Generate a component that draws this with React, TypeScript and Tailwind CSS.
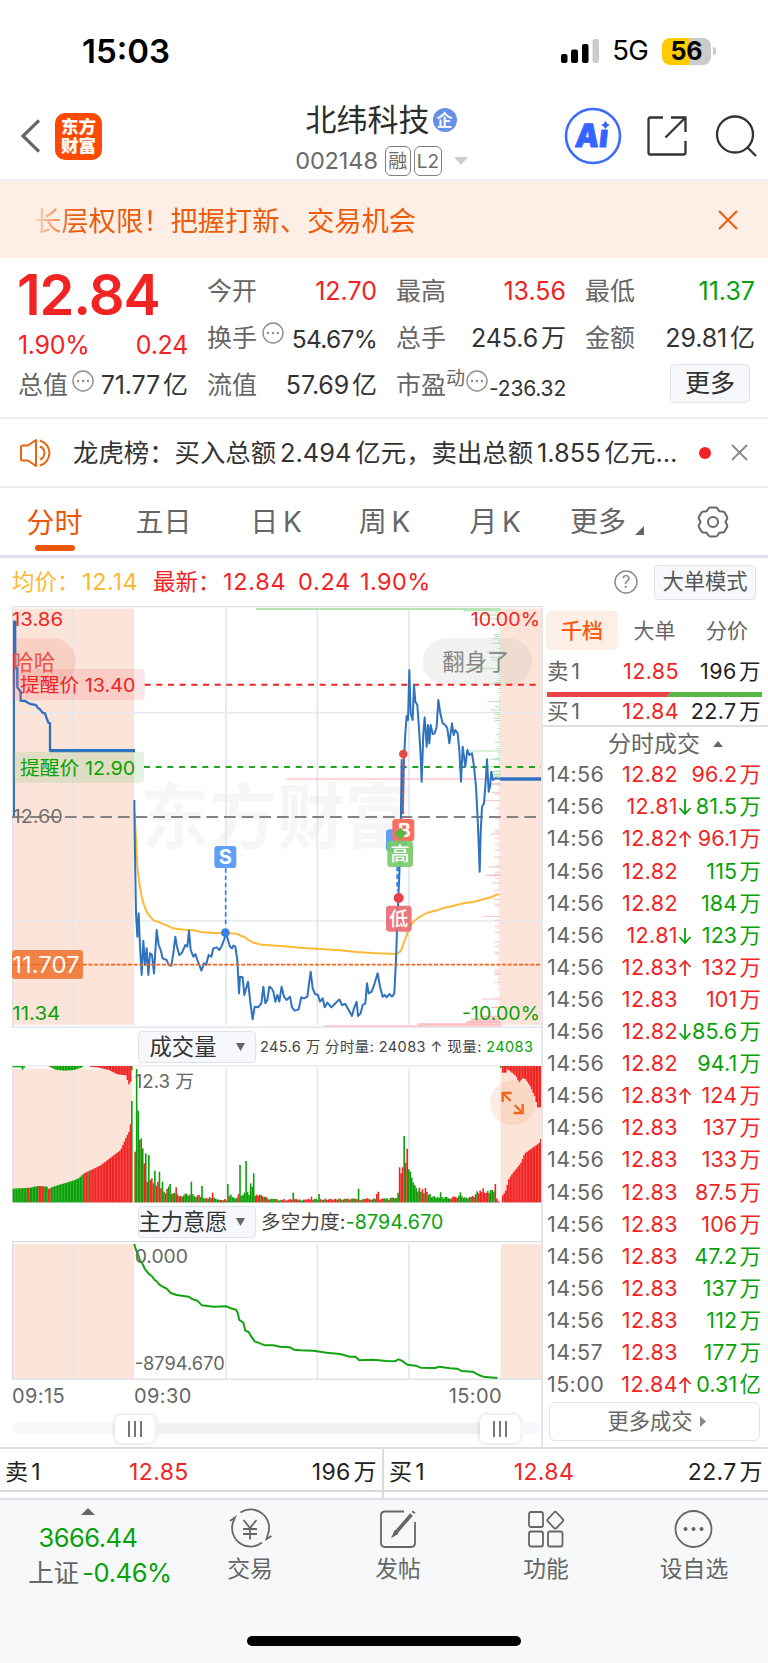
import type { ReactNode } from "react";

const RED = "#f12323";
const GREEN = "#07a207";
const PEACH = "#fce5d8";
const BLUE = "#2f72c0";

type Tone = "red" | "green";

const toneText: Record<Tone, string> = {
  red: "text-[#f12323]",
  green: "text-[#07a207]",
};

interface Trade {
  time: string;
  price: string;
  move?: "up" | "down";
  amount: string;
  unit?: string;
  tone: Tone;
}

const trades: Trade[] = [
  { time: "14:56", price: "12.82", amount: "96.2", tone: "red" },
  { time: "14:56", price: "12.81", move: "down", amount: "81.5", tone: "green" },
  { time: "14:56", price: "12.82", move: "up", amount: "96.1", tone: "red" },
  { time: "14:56", price: "12.82", amount: "115", tone: "green" },
  { time: "14:56", price: "12.82", amount: "184", tone: "green" },
  { time: "14:56", price: "12.81", move: "down", amount: "123", tone: "green" },
  { time: "14:56", price: "12.83", move: "up", amount: "132", tone: "red" },
  { time: "14:56", price: "12.83", amount: "101", tone: "red" },
  { time: "14:56", price: "12.82", move: "down", amount: "85.6", tone: "green" },
  { time: "14:56", price: "12.82", amount: "94.1", tone: "green" },
  { time: "14:56", price: "12.83", move: "up", amount: "124", tone: "red" },
  { time: "14:56", price: "12.83", amount: "137", tone: "red" },
  { time: "14:56", price: "12.83", amount: "133", tone: "red" },
  { time: "14:56", price: "12.83", amount: "87.5", tone: "red" },
  { time: "14:56", price: "12.83", amount: "106", tone: "red" },
  { time: "14:56", price: "12.83", amount: "47.2", tone: "green" },
  { time: "14:56", price: "12.83", amount: "137", tone: "green" },
  { time: "14:56", price: "12.83", amount: "112", tone: "green" },
  { time: "14:57", price: "12.83", amount: "177", tone: "green" },
  { time: "15:00", price: "12.84", move: "up", amount: "0.31", unit: "亿", tone: "green" },
];

// Chart drawings use a grid of three units per pixel.
const auctionLine =
  "42,205 52,205 52,262 62,275 62,302 75,303 90,312 108,315 112,322 120,328 128,338 135,340 140,355 145,368 150,370 150,452 405,452";
const morningLine =
  "403,600 404,700 408,940 412,1010 416,940 420,1040 425,1125 430,1022 435,1095 440,1045 445,1125 450,1060 456,1065 462,1120 470,990 476,1035 482,1050 488,1075 500,1080 506,1095 514,1097 520,1060 526,1010 531,1040 538,1065 546,1058 556,1035 562,1040 567,992 572,1050 580,1070 586,1062 592,1080 600,1100 604,1112 612,1090 618,1095 626,1065 634,1070 640,1045 650,1042 658,1050 664,1040 672,1020 678,1000 684,1020 690,1040 696,1045 700,1037 706,1040 712,1080 717,1180 720,1130 728,1132 733,1185 744,1145 752,1215 758,1258 764,1220 774,1222 784,1210 790,1160 796,1210 802,1200 808,1160 815,1165";
const afternoonLine =
  "5,1165 10,1175 16,1205 22,1185 28,1205 35,1160 42,1190 50,1200 60,1190 66,1222 74,1232 86,1228 94,1192 102,1195 112,1190 122,1115 128,1165 135,1182 144,1185 150,1205 158,1195 164,1222 172,1208 184,1222 194,1212 208,1198 216,1215 226,1212 236,1230 246,1248 252,1225 260,1205 264,1248 272,1240 278,1215 286,1210 291,1150 296,1180 305,1175 314,1150 323,1120 330,1160 338,1190 344,1185 350,1192 358,1182 366,1190 373,1180 378,1080 382,960 387,850 392,700 395,480 398,640 402,480 406,400 410,348 414,360 418,210 422,340 428,360 432,255 436,305 442,315 448,400 452,470 455,545 460,400 464,352 470,440 474,375 478,430 482,375 488,402 494,400 500,380 505,300 511,340 518,370 526,375 532,385 538,430 546,370 551,405 556,390 563,400 568,450 573,545 578,440 586,500 592,450 598,465 606,460 612,500 618,560 624,680 629,815 632,700 636,620 642,610 648,530 651,478 656,575 660,560 664,515 669,540 676,535 690,536";
const averageLine =
  "404,640 408,720 412,800 418,850 425,890 432,915 440,935 450,950 462,962 480,968 500,976 520,985 550,989 580,991 605,996 640,999 676,999 710,1001 725,1009 733,1010 742,1018 760,1028 785,1034 830,1037 870,1040 910,1044 960,1047 1020,1051 1070,1056 1130,1060 1190,1062 1200,1055 1206,1045 1212,1025 1217,1015 1222,1000 1230,980 1240,965 1255,953 1280,939 1310,931 1335,923 1370,915 1395,909 1420,906 1450,898 1475,891 1490,884 1497,883";
const forceLine =
  "403,672 408,690 414,702 420,722 428,732 434,746 446,761 456,769 464,780 472,786 478,794 490,801 500,806 512,819 530,825 566,830 576,837 592,842 606,856 640,860 680,859 690,864 708,869 713,878 718,900 730,908 736,932 746,936 754,950 764,964 780,970 795,976 820,976 840,980 870,982 882,989 900,991 940,992 980,998 1020,1002 1050,1010 1066,1010 1078,1021 1120,1019 1160,1023 1185,1024 1195,1018 1205,1022 1222,1034 1248,1037 1262,1043 1306,1044 1318,1040 1350,1045 1372,1046 1384,1053 1418,1055 1436,1065 1450,1070 1492,1074";

type Point = [number, number];

function sample(points: Point[], x: number) {
  for (let i = 1; i < points.length; i++) {
    const [x0, y0] = points[i - 1];
    const [x1, y1] = points[i];
    if (x <= x1) return y0 + ((y1 - y0) * Math.max(0, x - x0)) / (x1 - x0);
  }
  return points[points.length - 1][1];
}

function noise(i: number) {
  const v = Math.sin(i * 12.9898) * 43758.5453;
  return v - Math.floor(v);
}

interface Bar {
  x: number;
  y: number;
  h: number;
  fill: string;
}

const openingProfile: Point[] = [
  [38, 506], [90, 503], [100, 500], [115, 498], [139, 500], [143, 507], [155, 501], [180, 493],
  [220, 481], [235, 474], [250, 460], [300, 436], [360, 390], [375, 355], [385, 335], [391, 303],
];
const openingTop: Point[] = [
  [38, 142], [60, 142], [66, 150], [72, 140], [145, 140], [165, 149], [190, 152], [220, 150],
  [250, 140], [290, 142], [325, 150], [350, 163], [376, 166], [384, 194], [391, 182],
];
const closingProfile: Point[] = [
  [1507, 526], [1515, 512], [1525, 475], [1540, 455], [1560, 430], [1572, 400], [1600, 380], [1615, 370], [1620, 357],
];
const closingTop: Point[] = [
  [1507, 158], [1515, 158], [1520, 147], [1545, 167], [1555, 188], [1566, 174], [1575, 178], [1590, 202],
  [1603, 232], [1610, 262], [1621, 262],
];
const tradingProfile: Point[] = [
  [515, 42], [530, 24], [600, 21], [620, 16], [660, 10], [680, 9], [684, 30], [706, 12], [715, 32],
  [775, 30], [800, 12], [830, 9], [1130, 11], [1190, 14], [1195, 85], [1240, 52], [1270, 42], [1290, 22],
  [1310, 18], [1340, 14], [1370, 18], [1405, 15], [1430, 32], [1482, 40], [1490, 4], [1500, 4],
];
const spikes: [number, number, Tone][] = [
  [405, 395, "red"], [409, 147, "green"], [414, 272, "green"], [418, 360, "red"], [423, 355, "green"],
  [428, 385, "green"], [432, 430, "red"], [437, 400, "green"], [441, 485, "red"], [446, 405, "green"],
  [451, 480, "red"], [455, 475, "red"], [460, 490, "red"], [464, 452, "green"], [469, 497, "red"],
  [473, 485, "red"], [478, 455, "green"], [482, 505, "red"], [487, 485, "green"], [492, 515, "green"],
  [497, 520, "red"], [501, 507, "red"], [506, 500, "green"], [511, 492, "green"], [529, 502, "red"],
  [573, 485, "green"], [605, 498, "green"], [637, 518, "red"], [683, 492, "green"], [719, 435, "green"],
  [738, 423, "green"], [752, 490, "green"], [756, 500, "green"], [761, 460, "green"], [879, 518, "green"],
  [934, 530, "red"], [956, 522, "green"], [1075, 506, "green"], [1130, 522, "red"], [1134, 515, "red"],
  [1198, 442, "red"], [1203, 460, "red"], [1208, 442, "red"], [1212, 348, "green"], [1217, 428, "red"],
  [1222, 386, "red"], [1226, 448, "green"], [1231, 455, "green"], [1235, 473, "green"], [1322, 517, "green"],
  [1381, 517, "green"], [1450, 505, "red"], [1470, 510, "green"], [1486, 492, "red"], [1500, 470, "red"],
];

function openingTone(x: number) {
  if (x < 82) return GREEN;
  if (x < 87) return RED;
  if (x < 113) return GREEN;
  if (x < 125) return RED;
  if (x < 140) return GREEN;
  if (x < 152) return RED;
  if (x < 249) return GREEN;
  if (x < 258) return RED;
  return x < 263 ? GREEN : RED;
}

function buildVolumeBars() {
  const bars: Bar[] = [];
  for (let x = 38; x < 392; x += 4.56) {
    const y = sample(openingProfile, x);
    const top = sample(openingTop, x);
    bars.push({ x, y, h: 547 - y, fill: openingTone(x) });
    if (top > 141) bars.push({ x, y: 138, h: top - 138, fill: x > 250 || (x > 140 && x < 152) ? RED : GREEN });
  }
  bars.push({ x: 393, y: 243, h: 304, fill: GREEN }, { x: 393, y: 138, h: 12, fill: GREEN });

  for (let i = 0; i < 240; i++) {
    const x = 403 + i * 4.56;
    const spike = spikes.find(([sx]) => Math.abs(sx - 2 - x) <= 2.28);
    if (spike) {
      bars.push({ x, y: spike[1], h: 547 - spike[1], fill: spike[2] === "red" ? RED : GREEN });
      continue;
    }
    const h = Math.max(2, sample(tradingProfile, x) * (0.6 + 0.55 * noise(i + 3)));
    const greenShare = x > 1225 && x < 1440 ? 0.75 : 0.45;
    bars.push({ x, y: 547 - h, h, fill: noise(i * 1.7 + 11) < greenShare ? GREEN : RED });
  }

  bars.push({ x: 1500, y: 138, h: 6, fill: GREEN });
  for (let x = 1506; x < 1620; x += 4.56) {
    const y = sample(closingProfile, x);
    bars.push({ x, y, h: 547 - y, fill: RED });
    bars.push({ x, y: 138, h: sample(closingTop, x) - 138, fill: RED });
  }
  return bars;
}

const volumeBars = buildVolumeBars();

// Order book depth: [y, left edge, thickness]
const askDepth: [number, number, number][] = [
  [27, 768, 6], [32, 1390, 4], [45, 1450, 4], [57, 1413, 3], [104, 1480, 3], [116, 1478, 3], [130, 1474, 3],
  [156, 1460, 3], [172, 1470, 3], [180, 1476, 3], [205, 1403, 3], [252, 1472, 3], [305, 1462, 3],
  [330, 1472, 3], [354, 1480, 3], [404, 1487, 3], [453, 1398, 3], [478, 1470, 3], [500, 1468, 3], [515, 1476, 4], [524, 1480, 6],
];
const bidDepth: [number, number, number][] = [
  [537, 860, 4], [552, 1465, 5], [577, 1474, 3], [602, 1455, 3], [652, 1472, 3], [702, 1471, 3], [771, 1480, 3],
  [801, 1465, 3], [826, 1458, 4], [849, 1477, 3], [899, 1482, 3], [949, 1448, 3], [1122, 1484, 3],
  [1147, 1484, 3], [1197, 1445, 3], [1222, 1473, 4], [1250, 1440, 6], [1259, 1412, 7], [1266, 1399, 6], [1273, 1252, 7], [1278, 972, 4],
];

function depthTicks(from: number, to: number, seed: number) {
  const out: { y: number; w: number }[] = [];
  for (let y = from; y < to; y += 6) {
    const n = noise(y + seed);
    out.push({ y, w: n > 0.82 ? 18 : 2 + n * 8 });
  }
  return out;
}

function Label({
  x, y, size = 56, fill, width, weight, children,
}: {
  x: number; y: number; size?: number; fill: string; width?: number; weight?: number; children: ReactNode;
}) {
  return (
    <text x={x} y={y} fontSize={size} fill={fill} textLength={width} fontWeight={weight} lengthAdjust="spacingAndGlyphs">
      {children}
    </text>
  );
}

function Grid({ top, bottom }: { top: number; bottom: number }) {
  return (
    <g stroke="#e3e6ed" strokeWidth="5">
      {[219, 678, 952, 1227].map((x) => (
        <line key={x} x1={x} x2={x} y1={top} y2={bottom} />
      ))}
    </g>
  );
}

function PriceChart() {
  return (
    <svg viewBox="36 18 1590 1266" className="block h-[422px] w-[530px]">
      <rect x="36" y="26" width="366" height="1249" fill={PEACH} />
      <rect x="1502" y="26" width="122" height="1249" fill={PEACH} />
      <Label x={424} y={730} size={216} width={816} fill="#f6f6f6" weight={700}>东方财富</Label>
      <Grid top={24} bottom={1275} />
      <path d="M36 338H1624M36 963H1624" stroke="#e6e9ef" strokeWidth="5" />
      <path d="M36 19.5H1626M37.5 18V1284M36 1281.5H1626" stroke="#dcdfe6" strokeWidth="4" fill="none" />

      <g fill="#b9e5b6">
        {askDepth.map(([y, x, h]) => <rect key={y} x={x} y={y - h / 2} width={1502 - x} height={h} />)}
        {depthTicks(36, 530, 1).map(({ y, w }) => <rect key={y} x={1502 - w} y={y} width={w} height="3" />)}
      </g>
      <g fill="#fcbfc3">
        {bidDepth.map(([y, x, h]) => <rect key={y} x={x} y={y - h / 2} width={1502 - x} height={h} />)}
        {depthTicks(545, 1245, 5).map(({ y, w }) => <rect key={y} x={1502 - w} y={y} width={w} height="3" />)}
      </g>

      {/* Bullet comments */}
      <path d="M36 115H158a70 70 0 0 1 0 140H36z" fill="#f5b5ae" fillOpacity=".45" />
      <rect x="1268" y="115" width="329" height="140" rx="70" fill="#b8b8b8" fillOpacity=".2" />
      <Label x={1327} y={211} size={67} width={202} fill="#868686">翻身了</Label>

      <g fill="none" stroke={BLUE}>
        <path d="M42 650V62" strokeWidth="6" />
        <path d="M44 205V62" strokeWidth="10" />
        <polyline points={auctionLine} strokeWidth="7" />
        <path d="M150 452H405" strokeWidth="10" />
        <path d="M1500 537H1624" strokeWidth="11" />
      </g>
      <Label x={36} y={210} size={64} width={130} fill="#ee5148">哈哈</Label>

      <path d="M36 207H424q10 0 10 10V290q0 10-10 10H36z" fill="#f56a72" fillOpacity=".18" />
      <path d="M36 455H422q10 0 10 10V538q0 10-10 10H36z" fill="#73be70" fillOpacity=".2" />
      <path d="M434 254H1624" stroke={RED} strokeWidth="6" strokeDasharray="18 17" />
      <path d="M432 501H1624" stroke="#1fa61f" strokeWidth="6" strokeDasharray="18 17" />
      <path d="M36 651H1620" stroke="#838383" strokeWidth="6" strokeDasharray="35 18" />

      <g fill="none" strokeLinejoin="round">
        <polyline points={averageLine} stroke="#fbb935" strokeWidth="6" />
        <polyline points={morningLine} stroke={BLUE} strokeWidth="6" />
        <polyline points={afternoonLine} stroke={BLUE} strokeWidth="6" transform="translate(810 0)" />
      </g>
      <path d="M248 1094H1626" stroke="#f1661f" strokeWidth="5" strokeDasharray="12 5" />

      <Label x={36} y={77} width={153} fill={RED}>13.86</Label>
      <Label x={60} y={277} size={57} width={346} fill={RED}>提醒价 13.40</Label>
      <Label x={60} y={525} size={57} width={346} fill={GREEN}>提醒价 12.90</Label>
      <Label x={38} y={669} width={150} fill="#707070">12.60</Label>
      <rect x="36" y="1050" width="213" height="87" rx="10" fill="#f08246" />
      <path d="M40 1094H244" stroke="#e8641d" strokeWidth="4" strokeDasharray="12 5" />
      <Label x={37} y={1119} size={68} width={202} fill="#fff">11.707</Label>
      <Label x={37} y={1261} width={144} fill={GREEN}>11.34</Label>
      <Label x={1412} y={77} width={208} fill={RED}>10.00%</Label>
      <Label x={1386} y={1261} width={234} fill={GREEN}>-10.00%</Label>

      {/* Sell marker */}
      <path d="M677 805V975" stroke="#3580e6" strokeWidth="5" strokeDasharray="13 9" />
      <circle cx="676" cy="998" r="13" fill="#3581ea" />
      <rect x="643" y="738" width="66" height="66" rx="10" fill="#5d9ff9" />
      <text x="676" y="792" fontSize="60" fontWeight="700" fill="#fff" textAnchor="middle">S</text>

      {/* Buy marker, day high and day low */}
      <path d="M1210 470V655" stroke="#eb4b46" strokeWidth="5" strokeDasharray="12 8" />
      <path d="M1193 800V872" stroke="#3580e6" strokeWidth="8" strokeDasharray="14 9" />
      <circle cx="1210" cy="462" r="13" fill="#e64a48" />
      <rect x="1158" y="688" width="64" height="66" rx="10" fill="#5d9ff9" />
      <rect x="1177" y="657" width="66" height="66" rx="10" fill="#fa7061" />
      <text x="1213" y="710" fontSize="58" fontWeight="700" fill="#fff" textAnchor="middle">B</text>
      <rect x="1162" y="722" width="77" height="79" rx="10" fill="#78cb6d" fillOpacity=".93" />
      <text x="1200" y="783" fontSize="57" fontWeight="500" fill="#fff" textAnchor="middle">高</text>
      <path d="M1201 685l15 16-15 16-15-16z" fill="#55b944" stroke="#55b944" strokeWidth="4" strokeLinejoin="round" />
      <circle cx="1196" cy="894" r="15" fill="#e64248" />
      <rect x="1158" y="917" width="77" height="78" rx="10" fill="#ea6970" fillOpacity=".9" />
      <text x="1196" y="977" fontSize="57" fontWeight="500" fill="#fff" textAnchor="middle">低</text>
    </svg>
  );
}

function VolumeChart() {
  return (
    <svg viewBox="36 135 1590 414" className="block h-[138px] w-[530px]">
      <path d="M36 137.5H1626" stroke="#edeff3" strokeWidth="5" />
      <rect x="36" y="146" width="366" height="401" fill={PEACH} />
      <rect x="1502" y="146" width="122" height="401" fill={PEACH} />
      <rect x="397" y="138" width="6" height="409" fill="#fff" />
      <Grid top={146} bottom={547} />
      <path d="M37.5 135V549M36 547.5H1626" stroke="#dcdfe6" strokeWidth="3" fill="none" />
      {volumeBars.map((b, i) => (
        <rect key={i} x={b.x} y={b.y} width="4.8" height={b.h} fill={b.fill} />
      ))}
      <Label x={404} y={204} width={178} fill="#666">12.3 万</Label>
      <circle cx="1538" cy="248" r="68" fill="#f6a27b" fillOpacity=".2" />
      <g fill="none" stroke="#f0671c" strokeWidth="7">
        <path d="M1508 246V219H1535M1508 219l24 24" />
        <path d="M1568 252V279H1541M1568 279l-24-24" />
      </g>
    </svg>
  );
}

function ForceChart() {
  return (
    <svg viewBox="36 663 1590 417" className="block h-[139px] w-[530px]">
      <rect x="36" y="672" width="366" height="404" fill={PEACH} />
      <rect x="1502" y="672" width="122" height="404" fill={PEACH} />
      <Grid top={672} bottom={1076} />
      <path d="M36 664.5H1626M37.5 663V1080M36 1077.5H1626" stroke="#d9dce3" strokeWidth="4" fill="none" />
      <polyline points={forceLine} fill="none" stroke="#12a312" strokeWidth="6" strokeLinejoin="round" />
      <Label x={404} y={729} width={160} fill="#666">0.000</Label>
      <Label x={404} y={1051} width={270} fill="#666">-8794.670</Label>
    </svg>
  );
}

function StatusBar() {
  return (
    <div className="flex h-[102px] items-center pl-[82px] pr-[52px]">
      <span className="text-[33px] font-semibold leading-none text-black">15:03</span>
      <div className="ml-auto flex items-center">
        <svg viewBox="0 0 40 26" className="mr-[12px] h-[26px] w-[40px]">
          <rect x="1" y="16" width="6.5" height="9" rx="2" />
          <rect x="11" y="11.5" width="7" height="13.5" rx="2" />
          <rect x="22" y="6" width="6.5" height="19" rx="2" />
          <rect x="32.5" y="1" width="6.5" height="24" rx="2" fill="#cbcbcb" />
        </svg>
        <span className="text-[27.5px] leading-none tracking-[-0.8px] text-black">5G</span>
        <div className="ml-[14px] flex h-[27px] w-[49px] items-center justify-center rounded-[8px] bg-[linear-gradient(90deg,#fecb00_56%,#cbcbcb_56%)] text-[25px] font-bold leading-none text-black">
          56
        </div>
        <div className="ml-[2px] h-[8px] w-[3px] rounded-r-full bg-[#cbcbcb]" />
      </div>
    </div>
  );
}

function TitleBar() {
  return (
    <header className="grid h-[77px] grid-cols-[192px_372px_204px]">
      <div className="flex items-center pb-[9px] pl-[20px]">
        <svg viewBox="0 0 20 34" className="h-[34px] w-[20px]" fill="none" stroke="#666" strokeWidth="3.2">
          <path d="M19 1.5L3 17l16 15.5" />
        </svg>
        <div className="ml-[15px] flex h-[47px] w-[47px] flex-col items-center justify-center rounded-[10px] bg-[#fe4a02] text-[17.5px] font-black leading-[19px] text-white">
          <span>东方</span>
          <span>财富</span>
        </div>
      </div>
      <div className="flex flex-col items-center">
        <div className="flex h-[35px] items-center pl-[6px]">
          <h1 className="text-[31px] leading-none text-[#2d2d2d]">北纬科技</h1>
          <span className="ml-[3px] flex h-[24px] w-[24px] items-center justify-center rounded-full bg-[#668fe8] text-[16px] font-bold leading-none text-white">
            企
          </span>
        </div>
        <div className="flex h-[42px] items-center pl-[7px] pt-[6px] text-[#6b6b6b]">
          <span className="text-[23.5px] leading-none tracking-[-0.1px]">002148</span>
          <span className="ml-[7px] flex h-[30px] w-[26px] items-center justify-center rounded-[6px] border border-[#808080] text-[19px] leading-none">
            融
          </span>
          <span className="ml-[3px] flex h-[30px] w-[28px] items-center justify-center rounded-[6px] border border-[#808080] text-[19px] leading-none">
            L2
          </span>
          <svg viewBox="0 0 14 8" className="ml-[12px] h-[8px] w-[14px]" fill="#ccc">
            <path d="M0 0h14L7 8z" />
          </svg>
        </div>
      </div>
      <div className="flex items-center pb-[9px]">
        <svg viewBox="0 0 58 58" className="h-[58px] w-[58px]">
          <circle cx="29" cy="29" r="27" fill="none" stroke="#3b6bff" strokeWidth="2.6" />
          <g transform="translate(4.5 0) skewX(-6)">
            <text x="10" y="40" fontSize="32" fontWeight="900" fill="#3565ff" stroke="#3565ff" strokeWidth=".8" textLength="33" lengthAdjust="spacingAndGlyphs">
              Ai
            </text>
          </g>
          <rect x="34.5" y="12" width="13" height="10.5" fill="#fff" />
          <path d="M41.5 13.5q1 3.5 4.5 4.5-3.5 1-4.5 4.5-1-3.5-4.5-4.5 3.5-1 4.5-4.5z" fill="#3565ff" />
        </svg>
        <svg viewBox="0 0 40 40" className="ml-[25px] h-[40px] w-[40px]" fill="none" stroke="#333" strokeWidth="2.3">
          <path d="M16 1.5H3.5q-2 0-2 2V36.5q0 2 2 2H36.5q2 0 2-2V25M24 1.5H38.5V16M38.5 1.5L18.5 21.5" />
        </svg>
        <svg viewBox="0 0 42 42" className="ml-[28px] h-[42px] w-[42px]" fill="none" stroke="#333" strokeWidth="2.3">
          <circle cx="20" cy="19.5" r="18" />
          <path d="M32 32l9 9" />
        </svg>
      </div>
    </header>
  );
}

function Banner() {
  return (
    <div className="flex h-[79px] items-center border-t-2 border-[#eceef1] bg-[#fdeee6] pr-[30px] text-[#ec5c0c]">
      <div className="ml-[28px] mt-[4px] flex w-[560px] pl-[6px] [mask-image:linear-gradient(90deg,transparent_0,#000_46px)]">
        <span className="whitespace-nowrap text-[27.3px] leading-[36px]">长层权限！把握打新、交易机会</span>
      </div>
      <svg viewBox="0 0 20 20" className="ml-auto h-[20px] w-[20px]" fill="none" stroke="#ec5c0c" strokeWidth="2">
        <path d="M1 1l18 18M19 1L1 19" />
      </svg>
    </div>
  );
}

function Dots() {
  return (
    <svg viewBox="0 0 22 22" className="h-[22px] w-[22px] shrink-0" fill="#8a8a8a">
      <circle cx="11" cy="11" r="10" fill="none" stroke="#8f8f8f" strokeWidth="1.4" />
      <circle cx="6" cy="11" r="1.2" />
      <circle cx="11" cy="11" r="1.2" />
      <circle cx="16" cy="11" r="1.2" />
    </svg>
  );
}

function Stat({ label, extra, value, className = "tracking-[-0.1px] text-[#333]" }: { label: string; extra?: ReactNode; value: string; className?: string }) {
  return (
    <div className="flex h-[47px] items-center text-[25px] leading-none">
      <span className="-ml-[1px] shrink-0 text-[#666]">{label}</span>
      {extra}
      <span className={`ml-auto whitespace-nowrap [word-spacing:-4px] ${className}`}>{value}</span>
    </div>
  );
}

function QuotePanel() {
  return (
    <section className="grid h-[161px] grid-cols-4 gap-x-5 border-b-2 border-[#eceef0] pl-[19px] pr-[13px] pt-[10px]">
      <div className="flex flex-col text-[#f12323]">
        <div className="-ml-[2px] flex h-[54px] items-center text-[56px] font-semibold leading-none tracking-[-1.1px]">12.84</div>
        <div className="flex h-[40px] items-center justify-between pt-[7px] text-[25px] leading-none tracking-[-0.3px]">
          <span className="-ml-[1px]">1.90%</span>
          <span>0.24</span>
        </div>
        <Stat label="总值" extra={<span className="-mr-[4px] -mt-[10px] ml-[4px] flex"><Dots /></span>} value="71.77 亿" />
      </div>
      <div>
        <Stat label="今开" value="12.70" className="text-[#f12323]" />
        <Stat label="换手" extra={<span className="-mt-[12px] ml-[5px] flex"><Dots /></span>} value="54.67%" className="text-[24.5px] tracking-[-0.7px] text-[#333] pt-[2px]" />
        <Stat label="流值" value="57.69 亿" />
      </div>
      <div>
        <Stat label="最高" value="13.56" className="text-[#f12323]" />
        <Stat label="总手" value="245.6 万" />
        <Stat
          label="市盈"
          extra={
            <span className="-mt-[14px] flex items-center text-[19px] text-[#666]">
              动
              <span className="ml-[1px] mt-[4px] flex"><Dots /></span>
            </span>
          }
          value="-236.32"
          className="pt-[6px] text-[21px] text-[#333] tracking-[-0.2px]"
        />
      </div>
      <div>
        <Stat label="最低" value="11.37" className="text-[#07a207]" />
        <Stat label="金额" value="29.81 亿" />
        <div className="flex justify-end pr-[5px] pt-[2px]">
          <button className="h-[39px] w-[80px] rounded-[5px] border border-[#dfe3e9] bg-[#f7f8fb] text-[25px] leading-none text-[#2f2f2f]">更多</button>
        </div>
      </div>
    </section>
  );
}

function NewsBar() {
  return (
    <div className="flex h-[69px] items-center border-b-2 border-[#eceef0] pl-[20px] pr-[20px]">
      <svg viewBox="0 0 33 28" className="h-[28px] w-[33px]" fill="none" stroke="#ea6416" strokeWidth="2">
        <path d="M1 8q0-1.5 1.5-1.5H8l8-5.5v26l-8-5.5H2.500Q1 21.500 1 20z" strokeLinejoin="round" />
        <path d="M20 7.5a7 7 0 0 1 0 13M20 1.5a13 13 0 0 1 0 25" />
      </svg>
      <p className="ml-[20px] w-[606px] whitespace-nowrap text-[25.4px] leading-none text-[#333] [word-spacing:-3.2px]">
        龙虎榜：买入总额 2.494 亿元，卖出总额 1.855 亿元…
      </p>
      <span className="ml-[20px] h-[12px] w-[12px] shrink-0 rounded-full bg-[#f12323]" />
      <svg viewBox="0 0 17 17" className="ml-auto h-[17px] w-[17px] shrink-0" fill="none" stroke="#888" strokeWidth="1.8">
        <path d="M1 1l15 15M16 1L1 16" />
      </svg>
    </div>
  );
}

function PeriodTabs() {
  return (
    <nav className="flex h-[70px] items-center border-b-[3px] border-[#dfe2ea] text-[28px] leading-none text-[#666] [word-spacing:-3px]">
      <div className="flex h-full w-[109px] flex-col items-center text-[#ec5608]">
        <span className="mt-[21px]">分时</span>
        <span className="mt-[8px] h-[6px] w-[40px] rounded-full bg-[#ec5608]" />
      </div>
      <span className="w-[109px] text-center">五日</span>
      <span className="w-[116px] text-center">日 K</span>
      <span className="w-[101px] text-center">周 K</span>
      <span className="w-[120px] text-center">月 K</span>
      <span className="ml-[15px]">更多</span>
      <svg viewBox="0 0 9 9" className="ml-[9px] mt-[18px] h-[9px] w-[9px]" fill="#666">
        <path d="M9 0v9H0z" />
      </svg>
      <svg viewBox="0 0 34 34" className="ml-[52px] h-[34px] w-[34px]" fill="none" stroke="#666" strokeWidth="2" strokeLinejoin="round">
        <path d="M12.5 3.500q.8-1 2-1h5q1.200 0 2 1l1.800 2.800 3.400.2q1.300.1 2 1.200l2.300 4q.6 1.200 0 2.300L29.500 17l1.500 3q.6 1.100 0 2.300l-2.300 4q-.7 1.100-2 1.200l-3.400.2-1.800 2.800q-.8 1-2 1h-5q-1.200 0-2-1l-1.800-2.800-3.400-.2q-1.300-.1-2-1.200l-2.300-4q-.6-1.200 0-2.300l1.500-3L3 14q-.6-1.100 0-2.300l2.300-4q.7-1.100 2-1.200l3.400-.2z" />
        <circle cx="17" cy="17" r="5" />
      </svg>
    </nav>
  );
}

function SummaryRow() {
  return (
    <div className="flex h-[48px] items-center pl-[12px] pr-[12px] text-[22.5px] leading-none">
      <span className="w-[70px] text-[#fbb935]">均价：</span>
      <span className="w-[71px] text-[23.5px] tracking-[0.6px] text-[#fbb935]">12.14</span>
      <span className="w-[70px] text-[#f12323]">最新：</span>
      <span className="w-[75px] text-[23.5px] tracking-[0.7px] text-[#f12323]">12.84</span>
      <span className="w-[62px] text-[23.5px] tracking-[0.7px] text-[#f12323]">0.24</span>
      <span className="text-[23.5px] tracking-[0.4px] text-[#f12323]">1.90%</span>
      <svg viewBox="0 0 24 24" className="ml-auto h-[24px] w-[24px]">
        <circle cx="12" cy="12" r="11" fill="none" stroke="#888" strokeWidth="1.4" />
        <text x="12" y="18" fontSize="17" fill="#888" textAnchor="middle">?</text>
      </svg>
      <button className="ml-[16px] h-[35px] w-[102px] rounded-[4px] border border-[#dfe3e9] bg-[#f7f8fb] text-[21.3px] leading-none text-[#555]">
        大单模式
      </button>
    </div>
  );
}

function Picker({ children }: { children: ReactNode }) {
  return (
    <button className="flex h-[32px] w-[118px] shrink-0 items-center justify-between rounded-[4px] border border-[#dfe2e8] bg-[#f7f8fb] pr-[10px] text-[22.3px] leading-none text-[#333]">
      <span className="flex w-[88px] justify-center whitespace-nowrap">{children}</span>
      <svg viewBox="0 0 9 8" className="h-[8px] w-[9px] shrink-0" fill="#666">
        <path d="M0 0h9L4.500 8z" />
      </svg>
    </button>
  );
}

function Handle() {
  return (
    <span className="flex h-[28px] w-[40px] items-center justify-center gap-[4px] rounded-[6px] bg-white shadow-[0_0_5px_rgba(0,0,0,0.18)]">
      <i className="h-[16px] w-[2px] bg-[#777]" />
      <i className="h-[16px] w-[2px] bg-[#777]" />
      <i className="h-[16px] w-[2px] bg-[#777]" />
    </span>
  );
}

function Charts() {
  return (
    <div className="flex w-[530px] shrink-0 flex-col">
      <PriceChart />
      <div className="flex h-[37px] items-center pl-[126px] pt-[1px]">
        <Picker>成交量</Picker>
        <span className="ml-[4px] whitespace-nowrap text-[14.5px] leading-none tracking-[0.4px] text-[#444]">
          245.6 万 分时量: 24083 ↑ 现量: <span className="text-[#07a207]">24083</span>
        </span>
      </div>
      <VolumeChart />
      <div className="flex h-[38px] items-center pl-[126px]">
        <Picker>主力意愿</Picker>
        <span className="ml-[5px] mt-[2px] whitespace-nowrap text-[19.5px] leading-none tracking-[0.2px] text-[#444]">
          多空力度:<span className="text-[#07a207]">-8794.670</span>
        </span>
      </div>
      <ForceChart />
      <div className="flex h-[29px] items-center pt-[2px] text-[20px] leading-none tracking-[0.4px] text-[#666]">
        <span className="w-[122px]">09:15</span>
        <span>09:30</span>
        <span className="ml-auto mr-[40px]">15:00</span>
      </div>
      <div className="mt-[3px] flex h-[33px] items-center">
        <div className="-mr-[4px] h-[11px] w-[107px] rounded-l-full bg-[#f7f8fa]" />
        <Handle />
        <div className="h-[11px] flex-1 bg-[#f0f1f3]" />
        <Handle />
        <div className="mr-[1px] h-[11px] w-[21px] rounded-r-full bg-[#f7f8fa]" />
      </div>
    </div>
  );
}

function LevelRow({ side, price, amount }: { side: string; price: string; amount: string }) {
  return (
    <div className="flex h-[38px] items-center pl-[4px] pr-[7px] text-[21.5px] leading-none tracking-[0.4px] [word-spacing:-4px]">
      <span className="w-[50px] text-[#666]">{side}</span>
      <span className="w-[82px] text-right text-[#f12323]">{price}</span>
      <span className="ml-auto whitespace-nowrap text-[#222]">{amount} 万</span>
    </div>
  );
}

function TradeRow({ time, price, move, amount, unit = "万", tone }: Trade) {
  return (
    <div className="flex flex-1 items-center pl-[4px] pr-[7px] text-[21.5px] leading-none tracking-[0.4px] [word-spacing:-4px]">
      <span className="w-[60px] text-[#666]">{time}</span>
      <span className="w-[71px] text-right text-[#f12323]">{price}</span>
      <svg viewBox="0 0 14 18" className={`h-[18px] w-[14px] shrink-0 ${move === "down" ? "rotate-180" : ""}`} fill="none" stroke={move === "down" ? GREEN : RED} strokeWidth="1.8">
        {move && <path d="M7 17V2M1.500 8L7 2l5.500 6" />}
      </svg>
      <span className={`-ml-[20px] flex-1 whitespace-nowrap text-right tracking-[0.1px] ${toneText[tone]}`}>
        {amount} {unit}
      </span>
    </div>
  );
}

function OrderPanel() {
  return (
    <aside className="-ml-[1px] flex w-[227px] shrink-0 flex-col border-l-2 border-[#e3e6ec]">
      <div className="flex h-[48px] items-center pl-[3px] text-[21px] leading-none text-[#666]">
        <span className="flex h-[39px] w-[72px] items-center justify-center rounded-[5px] bg-[#fdeee6] font-medium text-[#fb5a0c]">千档</span>
        <span className="w-[73px] text-center">大单</span>
        <span className="w-[72px] text-center">分价</span>
      </div>
      <div className="-mt-[1px] mb-[1px]">
        <LevelRow side="卖 1" price="12.85" amount="196" />
      </div>
      <svg viewBox="0 0 215 5" className="ml-[4px] h-[5px] w-[215px]">
        <path d="M0 0h124l-4 5H0z" fill="#e94547" />
        <path d="M124 0h91v5H120z" fill="#55b645" />
      </svg>
      <div className="flex h-[30px] flex-col justify-center border-b-2 border-[#dcdfe4] pt-[2px]">
        <LevelRow side="买 1" price="12.84" amount="22.7" />
      </div>
      <div className="flex h-[32px] items-center pl-[65px] pt-[2px] text-[23px] leading-none text-[#666]">
        分时成交
        <svg viewBox="0 0 10 6" className="ml-[13px] h-[6px] w-[10px]" fill="#666">
          <path d="M5 0l5 6H0z" />
        </svg>
      </div>
      <div className="flex h-[642px] flex-col">
        {trades.map((trade, i) => <TradeRow key={i} {...trade} />)}
      </div>
      <button className="ml-[6px] mt-[1px] flex h-[39px] w-[211px] items-center justify-center rounded-[6px] border border-[#e4e4e4] pl-[4px] text-[21.3px] leading-none text-[#666]">
        更多成交
        <svg viewBox="0 0 6 11" className="ml-[7px] h-[11px] w-[6px]" fill="#888">
          <path d="M0 0l6 5.500L0 11z" />
        </svg>
      </button>
    </aside>
  );
}

function BestQuote({ side, price, amount }: { side: string; price: string; amount: string }) {
  return (
    <div className="grid h-[41px] grid-cols-3 items-center px-[5px] pt-[5px] text-[23px] leading-none tracking-[0.4px] text-[#222] [word-spacing:-4px]">
      <span>{side}</span>
      <span className="text-[#f12323]">{price}</span>
      <span className="whitespace-nowrap text-right">{amount} 万</span>
    </div>
  );
}

function NavItem({ label, children }: { label: string; children: ReactNode }) {
  return (
    <div className="flex w-[148px] flex-col items-center pt-[1px] text-[#666]">
      <svg viewBox="0 0 42 40" className="h-[40px] w-[42px] overflow-visible" fill="none" stroke="#666" strokeWidth="1.8">
        {children}
      </svg>
      <span className="mt-[9px] text-[22.8px] leading-none">{label}</span>
    </div>
  );
}

function BottomNav() {
  return (
    <footer className="flex flex-1 flex-col border-t-2 border-[#dcdfe4] bg-[#f7f8fa]">
      <div className="flex h-[136px] pt-[8px]">
        <div className="flex w-[176px] flex-col items-center">
          <svg viewBox="0 0 14 7" className="h-[7px] w-[14px]" fill="#666">
            <path d="M7 0l7 7H0z" />
          </svg>
          <span className="mt-[10px] text-[25.5px] leading-none tracking-[-0.5px] text-[#07a207]">3666.44</span>
          <span className="mt-[9px] whitespace-nowrap pl-[24px] text-[25.5px] leading-none tracking-[-0.4px] text-[#666]">
            上证 <span className="-ml-[3px] text-[#07a207]">-0.46%</span>
          </span>
        </div>
        <NavItem label="交易">
          <path d="M11.500 3.500A18.400 18.400 0 0 1 39 25L37.500 30L42.500 27M33 33.500A18.400 18.400 0 0 1 5 11L6 8.500L1 12" />
          <path d="M14.500 11L21 19l6.500-8M14 20h14M14 25h14M21 19v11.500" />
        </NavItem>
        <NavItem label="发帖">
          <path d="M27 2.500H8q-4 0-4 4V34q0 4 4 4h26q4 0 4-4V13" />
          <path d="M34.500 5.500L18.500 24M37 2.500l-1 1.500" strokeWidth="3.6" />
          <path d="M16 27l4-2.500-2-2z" fill="#666" />
        </NavItem>
        <NavItem label="功能">
          <rect x="4" y="3" width="14" height="15" rx="2" />
          <rect x="4" y="22.5" width="14" height="15" rx="2" />
          <rect x="23" y="22.5" width="14.5" height="15" rx="2" />
          <path d="M29 3.500q1.300-1.500 2.600 0l6 6.300q1.300 1.400 0 2.800l-6 6.200q-1.300 1.400-2.600 0l-6-6.200q-1.300-1.400 0-2.800z" />
        </NavItem>
        <NavItem label="设自选">
          <circle cx="20.5" cy="20" r="18" />
          <g fill="#666" stroke="none">
            <circle cx="12.5" cy="20" r="2" />
            <circle cx="20.5" cy="20" r="2" />
            <circle cx="28.5" cy="20" r="2" />
          </g>
        </NavItem>
      </div>
      <div className="mx-auto h-[10px] w-[274px] rounded-full bg-black" />
    </footer>
  );
}

export default function App() {
  return (
    <div className="flex h-[1663px] w-[768px] flex-col overflow-hidden bg-white [font-family:Inter,'Noto_Sans_CJK_SC',sans-serif]">
      <StatusBar />
      <TitleBar />
      <Banner />
      <QuotePanel />
      <NewsBar />
      <PeriodTabs />
      <SummaryRow />
      <main className="flex h-[843px] border-b-2 border-[#d8dbe2] pl-[12px]">
        <Charts />
        <OrderPanel />
      </main>
      <div className="flex h-[49px]">
        <div className="w-[384px] border-r-2 border-[#d8dbe2]">
          <div className="border-b-2 border-[#d8dbe2]">
            <BestQuote side="卖 1" price="12.85" amount="196" />
          </div>
        </div>
        <div className="flex-1">
          <div className="border-b-2 border-[#d8dbe2]">
            <BestQuote side="买 1" price="12.84" amount="22.7" />
          </div>
        </div>
      </div>
      <BottomNav />
    </div>
  );
}
